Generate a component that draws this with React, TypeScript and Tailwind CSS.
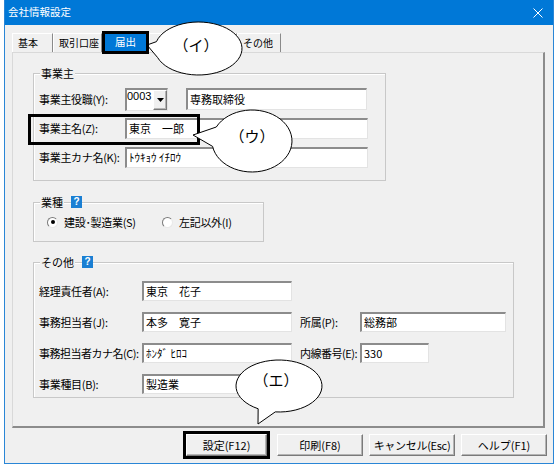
import React from "react";

const sunken =
  "bg-white border-t-2 border-l-2 border-r border-b border-t-[#8c8c8c] border-l-[#8c8c8c] border-r-[#e3e3e3] border-b-[#e3e3e3] flex items-center pl-[2px] text-[11px] leading-none text-black whitespace-nowrap";
const raised =
  "bg-[#f0f0f0] border border-t-white border-l-white border-r-[#7a7a7a] border-b-[#7a7a7a] shadow-[inset_-1px_-1px_0_#b4b4b4]";

function Tab({ label, className }: { label: string; className: string }) {
  return (
    <div className={`h-[19px] flex items-center pl-[5px] border-t border-l border-r border-t-white border-l-white border-r-[#8a8a8a] text-[10px] leading-none text-black whitespace-nowrap ${className}`}>
      {label}
    </div>
  );
}

function Legend({ text, help }: { text: string; help?: boolean }) {
  return (
    <div className="absolute left-[6px] -top-[8px] flex items-center h-[14px]">
      <span className="bg-[#f0f0f0] px-px text-[11px] leading-none">{text}</span>
      {help && (
        <span className="ml-[7px] w-[11px] h-[12px] bg-[#1a7fd3] text-white text-[10px] font-bold leading-none flex items-center justify-center font-['Liberation_Sans',sans-serif]">
          ?
        </span>
      )}
    </div>
  );
}

function Radio({ checked }: { checked?: boolean }) {
  return (
    <div className="w-[11px] h-[11px] rounded-full bg-white border border-t-[#7a7a7a] border-l-[#7a7a7a] border-r-[#e8e8e8] border-b-[#e8e8e8] flex items-center justify-center">
      {checked && <div className="w-[4px] h-[4px] rounded-full bg-black" />}
    </div>
  );
}

export default function App() {
  return (
    <div className="relative w-[556px] h-[467px] bg-white overflow-hidden text-black font-['Noto_Sans_CJK_JP','Liberation_Sans',sans-serif]">
      <div className="ml-[4px] w-[550px] h-[464px] border-x border-b border-[#2a86d6] flex flex-col bg-[#f0f0f0]">
        {/* title bar */}
        <div className="h-[25px] shrink-0 bg-[#0078d7] flex items-center justify-between pl-[3px] pr-[10px] text-white">
          <span className="text-[10.5px] leading-none">会社情報設定</span>
          <svg width="10" height="10" viewBox="0 0 10 10">
            <path d="M0.5 0.5 L9.5 9.5 M9.5 0.5 L0.5 9.5" stroke="white" strokeWidth="1" />
          </svg>
        </div>

        <div className="flex-1 flex flex-col pl-[7px] pt-[6px]">
          {/* tabs */}
          <div className="h-[21px] flex items-end">
            <Tab label="基本" className="w-[41px]" />
            <Tab label="取引口座" className="w-[49px]" />
            <div className="relative z-10 w-[47px] h-[23px] -mb-[2px] border-[3px] border-black bg-[#0078d7] text-white text-[10.5px] leading-none flex items-center justify-center">
              届出
            </div>
            <Tab label="" className="w-[44px]" />
            <Tab label="" className="w-[44px]" />
            <Tab label="その他" className="w-[44px]" />
          </div>

          {/* panel */}
          <div className="w-[533px] h-[376px] border-t border-l border-r-2 border-b-2 border-t-[#d9d9d9] border-l-[#d9d9d9] border-r-[#8c8c8c] border-b-[#8c8c8c] pl-[20px] pt-[20px] flex flex-col">
            {/* 事業主 */}
            <div className="relative w-[353px] h-[108px] border border-[#c8c8c8] shadow-[inset_1px_1px_0_#fff] pl-[5px] pt-[14px] flex flex-col gap-[7px]">
              <Legend text="事業主" />
              <div className="flex items-center h-[22px]">
                <span className="w-[86px] text-[11px] leading-none tracking-[-0.3px]">事業主役職(Y):</span>
                <div className="w-[43px] h-[23px] bg-white border-t-2 border-l-2 border-r border-b border-t-[#8c8c8c] border-l-[#8c8c8c] border-r-[#e3e3e3] border-b-[#e3e3e3] flex">
                  <span className="flex-1 text-[11px] leading-none pt-[1px] font-['Liberation_Sans',sans-serif]">0003</span>
                  <div className={`w-[14px] h-full flex items-center justify-center ${raised}`}>
                    <svg width="7" height="4" viewBox="0 0 7 4">
                      <path d="M0 0 H7 L3.5 4 Z" fill="black" />
                    </svg>
                  </div>
                </div>
                <div className={`ml-[18px] w-[181px] h-[22px] ${sunken}`}>専務取締役</div>
              </div>
              <div className="flex items-center h-[22px]">
                <span className="w-[86px] text-[11px] leading-none tracking-[-0.3px]">事業主名(Z):</span>
                <div className={`w-[243px] h-[21px] ${sunken}`}>東京　一郎</div>
              </div>
              <div className="flex items-center h-[22px]">
                <span className="w-[86px] text-[11px] leading-none tracking-[-0.3px]">事業主カナ名(K):</span>
                <div className={`w-[243px] h-[21px] ${sunken}`}>ﾄｳｷｮｳ ｲﾁﾛｳ</div>
              </div>
            </div>

            {/* 業種 */}
            <div className="relative mt-[21px] w-[231px] h-[40px] border border-[#c8c8c8] shadow-[inset_1px_1px_0_#fff] pl-[13px] flex items-center">
              <Legend text="業種" help />
              <div className="w-[115px] flex items-center gap-[6px]">
                <Radio checked />
                <span className="text-[11px] leading-none tracking-[-0.3px]">建設･製造業(S)</span>
              </div>
              <div className="flex items-center gap-[6px]">
                <Radio />
                <span className="text-[11px] leading-none tracking-[-0.3px]">左記以外(I)</span>
              </div>
            </div>

            {/* その他 */}
            <div className="relative mt-[20px] w-[481px] h-[136px] border border-[#c8c8c8] shadow-[inset_1px_1px_0_#fff] pl-[5px] pt-[18px] flex flex-col gap-[11px]">
              <Legend text="その他" help />
              <div className="flex items-center h-[20px]">
                <span className="w-[103px] text-[11px] leading-none tracking-[-0.3px]">経理責任者(A):</span>
                <div className={`w-[150px] h-[20px] ${sunken}`}>東京　花子</div>
              </div>
              <div className="flex items-center h-[20px]">
                <span className="w-[103px] text-[11px] leading-none tracking-[-0.3px]">事務担当者(J):</span>
                <div className={`w-[150px] h-[20px] ${sunken}`}>本多　寛子</div>
                <span className="ml-[8px] w-[60px] text-[11px] leading-none tracking-[-0.3px]">所属(P):</span>
                <div className={`w-[146px] h-[20px] ${sunken}`}>総務部</div>
              </div>
              <div className="flex items-center h-[20px]">
                <span className="w-[103px] text-[11px] leading-none tracking-[-0.5px] whitespace-nowrap">事務担当者カナ名(C):</span>
                <div className={`w-[150px] h-[20px] ${sunken}`}>ﾎﾝﾀﾞ ﾋﾛｺ</div>
                <span className="ml-[8px] w-[60px] text-[11px] leading-none tracking-[-0.5px] whitespace-nowrap">内線番号(E):</span>
                <div className={`w-[69px] h-[20px] ${sunken}`}>330</div>
              </div>
              <div className="flex items-center h-[20px]">
                <span className="w-[103px] text-[11px] leading-none tracking-[-0.3px]">事業種目(B):</span>
                <div className={`w-[150px] h-[20px] ${sunken}`}>製造業</div>
              </div>
            </div>
          </div>

          {/* buttons */}
          <div className="h-[34px] flex items-center justify-end pr-[6px] gap-[6px]">
            <div className="mr-px w-[87px] h-[28px] border-[3px] border-black">
              <div className={`w-full h-full flex items-center justify-center text-[11px] leading-none ${raised}`}>設定(F12)</div>
            </div>
            <div className={`w-[86px] h-[22px] flex items-center justify-center text-[11px] leading-none ${raised}`}>印刷(F8)</div>
            <div className={`w-[86px] h-[22px] flex items-center justify-center text-[11px] leading-none tracking-[-0.3px] ${raised}`}>キャンセル(Esc)</div>
            <div className={`w-[86px] h-[22px] flex items-center justify-center text-[11px] leading-none ${raised}`}>ヘルプ(F1)</div>
          </div>
        </div>
      </div>

      {/* highlight around 事業主名 */}
      <div className="absolute left-[28px] top-[114px] w-[172px] h-[31px] border-[3px] border-black" />

      {/* callouts */}
      <svg className="absolute left-0 top-0 pointer-events-none" width="556" height="467" viewBox="0 0 556 467">
        <g fill="white" stroke="black" strokeWidth="1">
          <path d="M156.48 41.64 A43.5 26.5 0 1 1 157.62 57.56 L147 45 Z" />
          <path d="M216.3 127 A40 31 0 1 1 212.6 146.4 L193 135 Z" />
          <path d="M258.15 408.74 A43 26 0 1 1 275.25 411.9 L258 424 Z" />
        </g>
        <g fontFamily="Noto Sans CJK JP, sans-serif" fontSize="15" textAnchor="middle" dominantBaseline="central" fill="black">
          <text x="196" y="44">（イ）</text>
          <text x="252" y="135">（ウ）</text>
          <text x="276" y="379">（エ）</text>
        </g>
      </svg>
    </div>
  );
}
